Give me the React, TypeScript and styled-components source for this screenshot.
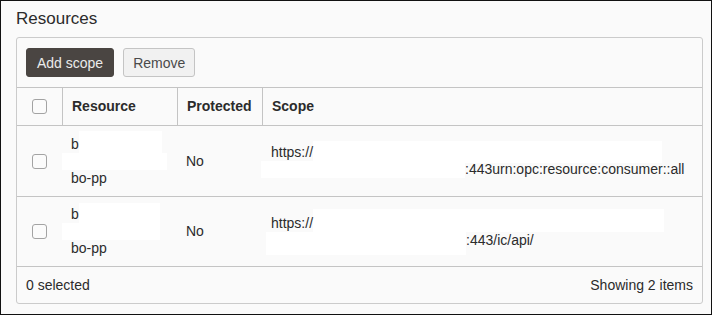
import React from "react";
import styled, { createGlobalStyle } from "styled-components";

const Global = createGlobalStyle`
  html, body { margin: 0; padding: 0; background: #fafafa; }
  * { box-sizing: border-box; }
  body { font-family: "Liberation Sans", Arial, sans-serif; color: #2e2e2e; }
`;

const Frame = styled.div`
  width: 712px;
  height: 315px;
  border: 1px solid #111;
  background: #fafafa;
  padding: 8px 8px 0 15px;
  display: flex;
  flex-direction: column;
  gap: 8px;
`;

const Title = styled.h2`
  margin: 0;
  font-size: 17px;
  line-height: 20px;
  font-weight: 400;
  color: #2b2b2b;
`;

const Card = styled.section`
  border: 1px solid #cbcbcb;
  border-radius: 3px;
  background: #fafafa;
  display: flex;
  flex-direction: column;
`;

const Toolbar = styled.div`
  height: 50px;
  padding: 10px 9px 0;
  display: flex;
  gap: 9px;
  align-items: flex-start;
  border-bottom: 1px solid #c4c4c4;
`;

const Button = styled.button<{ $primary?: boolean }>`
  height: 29px;
  padding: 0 ${(p) => (p.$primary ? 10 : 9)}px;
  border-radius: 3px;
  font-family: "Liberation Sans", Arial, sans-serif;
  font-size: 14px;
  cursor: pointer;
  border: 1px solid ${(p) => (p.$primary ? "#4a4542" : "#c4c4c4")};
  background: ${(p) => (p.$primary ? "#4a4542" : "#f1f1f1")};
  color: ${(p) => (p.$primary ? "#ebebeb" : "#4a4a4a")};
`;

const Row = styled.div<{ $h: number; $head?: boolean }>`
  display: grid;
  grid-template-columns: 45px 115px 85px 1fr;
  height: ${(p) => p.$h}px;
  border-bottom: 1px solid #c4c4c4;
  font-weight: ${(p) => (p.$head ? 700 : 400)};
`;

const Cell = styled.div<{ $divider?: boolean; $center?: boolean }>`
  display: flex;
  align-items: center;
  justify-content: ${(p) => (p.$center ? "center" : "flex-start")};
  padding: 0 9px;
  font-size: 14px;
  line-height: 17px;
  color: #2b2b2b;
  border-left: ${(p) => (p.$divider ? "1px solid #c4c4c4" : "none")};
`;

const Stack = styled.div`
  display: flex;
  flex-direction: column;
`;

const Line = styled.div`
  height: 17px;
  white-space: nowrap;
  display: flex;
  align-items: flex-end;
`;

const Redact = styled.span<{ $w: number; $above?: number; $below?: number; $left?: number }>`
  display: inline-block;
  flex: none;
  align-self: flex-end;
  width: ${(p) => p.$w}px;
  height: ${(p) => 17 + (p.$above ?? 0) + (p.$below ?? 0)}px;
  margin-top: ${(p) => -(p.$above ?? 0)}px;
  margin-bottom: ${(p) => -(p.$below ?? 0)}px;
  margin-left: ${(p) => -(p.$left ?? 0)}px;
  background: #ffffff;
`;

const Text = styled.span`
  position: relative;
  line-height: 17px;
`;

const Check = styled.span`
  width: 15px;
  height: 15px;
  border: 1px solid #a3a3a3;
  border-radius: 3px;
  background: #fbfbfb;
  display: inline-block;
`;

const Footer = styled.div`
  height: 36px;
  padding: 0 9px;
  display: flex;
  align-items: center;
  justify-content: space-between;
  font-size: 14px;
  color: #2b2b2b;
`;

type Res = {
  h: number;
  topW: number;
  topAbove: number;
  midW: number;
  scopeTop: { w: number; above: number; below: number };
  scopeBottom: { w: number; below: number; left: number };
  tail: string;
};

const rows: Res[] = [
  {
    h: 70,
    topW: 83,
    topAbove: 5,
    midW: 105,
    scopeTop: { w: 349, above: 3, below: 2 },
    scopeBottom: { w: 204, below: 0, left: 10 },
    tail: ":443urn:opc:resource:consumer::all",
  },
  {
    h: 69,
    topW: 81,
    topAbove: 3,
    midW: 98,
    scopeTop: { w: 351, above: 6, below: 0 },
    scopeBottom: { w: 200, below: 6, left: 5 },
    tail: ":443/ic/api/",
  },
];

export default function App() {
  return (
    <>
      <Global />
      <Frame>
        <Title>Resources</Title>
        <Card>
          <Toolbar>
            <Button $primary>Add scope</Button>
            <Button>Remove</Button>
          </Toolbar>
          <Row $h={38} $head>
            <Cell $center>
              <Check />
            </Cell>
            <Cell $divider>Resource</Cell>
            <Cell $divider>Protected</Cell>
            <Cell $divider>Scope</Cell>
          </Row>
          {rows.map((r, i) => (
            <Row key={i} $h={r.h + 1}>
              <Cell $center>
                <Check />
              </Cell>
              <Cell>
                <Stack>
                  <Line>
                    <Text>b</Text>
                    <Redact $w={r.topW} $above={r.topAbove} />
                  </Line>
                  <Line>
                    <Redact $w={r.midW} $left={9} />
                  </Line>
                  <Line>
                    <Text>bo-pp</Text>
                  </Line>
                </Stack>
              </Cell>
              <Cell>No</Cell>
              <Cell>
                <Stack>
                  <Line>
                    <Text>https://</Text>
                    <Redact
                      $w={r.scopeTop.w}
                      $above={r.scopeTop.above}
                      $below={r.scopeTop.below}
                    />
                  </Line>
                  <Line>
                    <Redact
                      $w={r.scopeBottom.w}
                      $below={r.scopeBottom.below}
                      $left={r.scopeBottom.left}
                    />
                    <Text>{r.tail}</Text>
                  </Line>
                </Stack>
              </Cell>
            </Row>
          ))}
          <Footer>
            <span>0 selected</span>
            <span>Showing 2 items</span>
          </Footer>
        </Card>
      </Frame>
    </>
  );
}
